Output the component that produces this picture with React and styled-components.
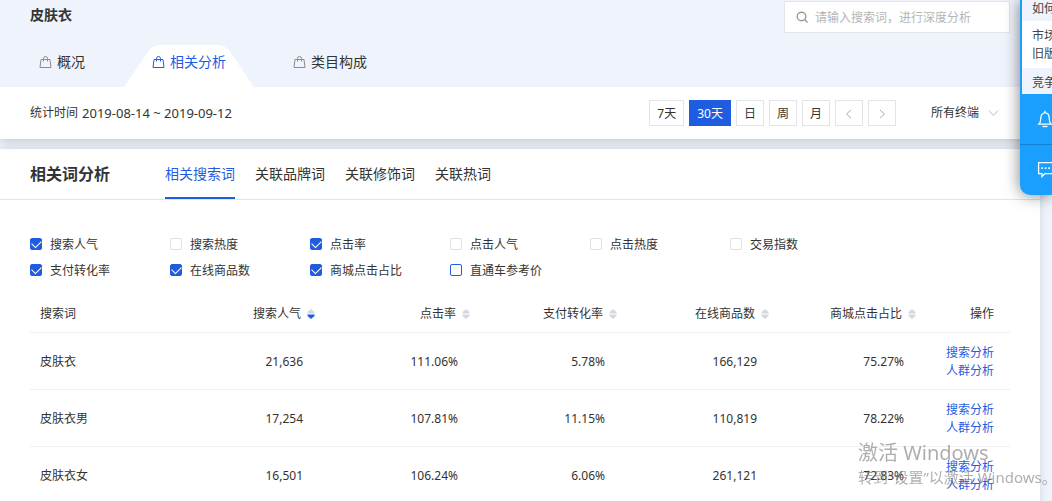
import { useState } from "react";
import styled, { createGlobalStyle, css } from "styled-components";

const GlobalStyle = createGlobalStyle`
  * {
    box-sizing: border-box;
  }

  html {
    scrollbar-width: none;
  }

  body {
    margin: 0;
    background: #eff3fb;
    color: #333;
    font-family: "Noto Sans", "Noto Sans CJK SC", sans-serif;
    font-size: 12px;
    line-height: 18px;
  }

  button,
  input,
  select {
    font: inherit;
    color: inherit;
  }

  h1,
  h2 {
    margin: 0;
  }
`;

const Page = styled.div`
  min-height: 100vh;
  padding-right: 12px;
`;

const Header = styled.header`
  position: relative;
  background: #eff3fb;
  box-shadow: 0 2px 10px rgba(0, 0, 0, 0.2);
`;

const HeaderTop = styled.div`
  display: flex;
  align-items: flex-start;
  justify-content: space-between;
  padding: 1px 30px 12px;
`;

const PageTitle = styled.h1`
  font-size: 14px;
  line-height: 28px;
`;

const SearchBox = styled.label`
  display: flex;
  align-items: center;
  gap: 6px;
  width: 226px;
  height: 32px;
  padding: 0 11px;
  border: 1px solid #e2e4e8;
  background: #fff;
`;

const SearchInput = styled.input`
  flex: 1;
  min-width: 0;
  padding: 1px 0 0;
  border: 0;
  outline: 0;
  background: none;

  &::placeholder {
    color: #b5b5b5;
    opacity: 1;
  }
`;

const MainTabs = styled.nav`
  display: flex;
  gap: 12px;
  padding-left: 11px;
`;

const MainTab = styled.button`
  display: flex;
  align-items: center;
  gap: 5px;
  height: 42px;
  padding: 0 27px 8px 28px;
  border: 0;
  background: none;
  font-size: 14px;
  cursor: pointer;

  svg {
    color: #8c8c8c;
  }

  ${({ $active }) =>
    $active &&
    css`
      background: #fff;
      color: #1f5de0;
      clip-path: path("M0 42 L23 8 Q28 0 36 0 H94 Q102 0 107 8 L130 42 Z");

      svg {
        color: #1f5de0;
      }
    `}
`;

const FilterBar = styled.div`
  display: flex;
  align-items: center;
  height: 52px;
  padding: 0 41px 0 30px;
  background: #fff;
`;

const Period = styled.div`
  display: flex;
  gap: 4px;
  margin-right: auto;

  time {
    font-size: 13px;
  }
`;

const RangeButtons = styled.div`
  display: flex;
  gap: 5px;
  margin-right: 35px;
`;

const RangeButton = styled.button`
  display: flex;
  align-items: center;
  justify-content: center;
  min-width: 28px;
  height: 26px;
  padding: 2px 7px 0;
  border: 1px solid ${({ $active }) => ($active ? "#1f5de0" : "#e2e4e8")};
  background: ${({ $active }) => ($active ? "#1f5de0" : "#fff")};
  color: ${({ $active }) => ($active ? "#fff" : "#333")};
  cursor: pointer;

  svg {
    flex: none;
    color: #aaa;
  }
`;

const TerminalSelect = styled.label`
  display: flex;
  align-items: center;
  gap: 8px;
  color: #bbb;
`;

const Select = styled.select`
  appearance: none;
  padding: 0;
  border: 0;
  background: none;
  color: #333;
`;

const Card = styled.section`
  margin-top: 10px;
  background: #fff;
  box-shadow: 0 0 8px rgba(0, 0, 0, 0.12);
`;

const CardHeader = styled.div`
  display: flex;
  align-items: stretch;
  gap: 55px;
  height: 51px;
  padding: 0 30px;
  border-bottom: 1px solid #e2e4e8;
`;

const CardTitle = styled.h2`
  font-size: 16px;
  line-height: 50px;
`;

const WordTabs = styled.nav`
  display: flex;
  gap: 20px;
`;

const WordTab = styled.button`
  padding: 2px 0 0;
  border: 0;
  border-bottom: 2px solid ${({ $active }) => ($active ? "#1f5de0" : "transparent")};
  background: none;
  color: ${({ $active }) => ($active ? "#1f5de0" : "#333")};
  font-size: 14px;
  cursor: pointer;
`;

const CardBody = styled.div`
  padding: 31px 30px 30px;
`;

const Metrics = styled.div`
  display: grid;
  grid-template-columns: repeat(6, 140px);
  margin-bottom: 12px;
`;

const Metric = styled.label`
  display: flex;
  align-items: center;
  gap: 8px;
  height: 26px;
`;

const MetricName = styled.span`
  padding-top: 2px;
`;

const Checkbox = styled.input`
  appearance: none;
  display: grid;
  place-items: center;
  width: 12px;
  height: 12px;
  margin: 0;
  border: 1px solid ${({ $focused }) => ($focused ? "#1f5de0" : "#dde0e4")};
  border-radius: 2px;
  background: #fff;

  &:checked {
    border-color: #1f5de0;
    background: #1f5de0;
  }

  &:checked::after {
    content: "";
    width: 8px;
    height: 5px;
    margin-bottom: 3px;
    border: solid #fff;
    border-width: 0 0 1px 1px;
    transform: rotate(-45deg);
  }
`;

const Table = styled.table`
  width: 100%;
  table-layout: fixed;
  border-collapse: separate;
  border-spacing: 0;
`;

const Th = styled.th`
  width: ${({ $width }) => $width}px;
  height: 38px;
  padding: 1px ${({ $last }) => ($last ? 16 : 10)}px 0 10px;
  border-bottom: 1px solid #f0f1f3;
  font-weight: 400;
  text-align: ${({ $left }) => ($left ? "left" : "right")};
`;

const SortButton = styled.button`
  display: inline-flex;
  align-items: center;
  gap: 6px;
  padding: 0;
  border: 0;
  background: none;
  cursor: pointer;
`;

const Td = styled.td`
  height: 57px;
  padding: 2px ${({ $last }) => ($last ? 16 : 22)}px 0 10px;
  border-bottom: 1px solid #f0f1f3;
  text-align: ${({ $left }) => ($left ? "left" : "right")};
`;

const ActionLink = styled.a`
  display: block;
  color: #1f5de0;
  text-decoration: none;
`;

const SidePanel = styled.aside`
  position: fixed;
  top: 0;
  right: 0;
  width: 32px;
  border-radius: 0 0 0 10px;
  background: #1a9fff;
  box-shadow: 0 0 16px rgba(0, 0, 0, 0.5);
`;

const Notice = styled.a`
  display: block;
  margin-left: 2px;
  padding: ${({ $lines }) => ($lines > 1 ? "6px 0 5px 10px" : "6px 0 2px 10px")};
  overflow: hidden;
  background: ${({ $tinted }) => ($tinted ? "#eff3fb" : "#fff")};
  color: #444;
  text-decoration: none;
  white-space: nowrap;

  &:first-child {
    padding: 0 0 3px 10px;
  }
`;

const NoticeLine = styled.span`
  display: block;
`;

const SideButton = styled.button`
  display: flex;
  align-items: center;
  width: 100%;
  height: ${({ $divided }) => ($divided ? 51 : 50)}px;
  padding: 0 0 2px 17px;
  border: 0;
  border-top: 1px solid ${({ $divided }) => ($divided ? "#1480d0" : "transparent")};
  background: none;
  color: #fff;
  overflow: hidden;

  svg {
    flex: none;
  }
`;

const Watermark = styled.div`
  position: fixed;
  right: 0;
  bottom: 12px;
  width: 194px;
  color: rgba(120, 120, 120, 0.6);
  font-size: 15px;
  line-height: 24px;
  white-space: nowrap;
  pointer-events: none;
`;

const WatermarkTitle = styled.div`
  font-size: 20px;
`;

const BagIcon = () => (
  <svg width="13" height="13" viewBox="0 0 13 13" fill="none" stroke="currentColor" aria-hidden="true">
    <path d="M2 3.500h9l1 8H1z" />
    <path d="M4.500 5.500V2.500a2 2 0 0 1 4 0v3" />
  </svg>
);

const SearchIcon = () => (
  <svg width="13" height="13" viewBox="0 0 13 13" fill="none" stroke="#999" strokeWidth="1.4" aria-hidden="true">
    <circle cx="5.5" cy="5.5" r="4.3" />
    <path d="M8.6 8.6l3 3" />
  </svg>
);

const Chevron = ({ d, width = 10, height = 10 }) => (
  <svg width={width} height={height} viewBox={`0 0 ${width} ${height}`} fill="none" stroke="currentColor" aria-hidden="true">
    <path d={d} />
  </svg>
);

const SortIcon = ({ descending }) => (
  <svg width="8" height="10" viewBox="0 0 8 10" aria-hidden="true">
    <path d="M4 0l3.500 3v1.500h-7V3z" fill="#d3d9e0" />
    <path d="M4 10L.5 7V5.500h7V7z" fill={descending ? "#1f5de0" : "#d3d9e0"} />
  </svg>
);

const BellIcon = () => (
  <svg width="16" height="18" viewBox="0 0 16 18" fill="none" stroke="currentColor" strokeWidth="1.3" aria-hidden="true">
    <path d="M8 .8v2M1.800 14.200c1.500-1.500 2-3 2-6C3.800 5 5.500 2.800 8 2.800s4.200 2.200 4.200 5.400c0 3 .5 4.500 2 6z" />
    <path d="M5.500 16.500h5" />
  </svg>
);

const ChatIcon = () => (
  <svg width="17" height="17" viewBox="0 0 17 17" fill="none" stroke="currentColor" strokeWidth="1.3" aria-hidden="true">
    <path d="M1.600 1.600h14v11H8l-3 3v-3H1.600z" />
    <path d="M4.300 7.100h1.600M7.800 7.100h1.600M11.300 7.100h1.600" strokeWidth="1.600" />
  </svg>
);

const mainTabs = ["概况", "相关分析", "类目构成"];
const ranges = ["7天", "30天", "日", "周", "月"];
const wordTabs = ["相关搜索词", "关联品牌词", "关联修饰词", "关联热词"];

const metrics = [
  { label: "搜索人气", checked: true },
  { label: "搜索热度" },
  { label: "点击率", checked: true },
  { label: "点击人气" },
  { label: "点击热度" },
  { label: "交易指数" },
  { label: "支付转化率", checked: true },
  { label: "在线商品数", checked: true },
  { label: "商城点击占比", checked: true },
  { label: "直通车参考价", focused: true },
];

const columns = [
  { label: "搜索人气", width: 155 },
  { label: "点击率", width: 155 },
  { label: "支付转化率", width: 147 },
  { label: "在线商品数", width: 152 },
  { label: "商城点击占比", width: 147 },
];

const rows = [
  { word: "皮肤衣", values: ["21,636", "111.06%", "5.78%", "166,129", "75.27%"] },
  { word: "皮肤衣男", values: ["17,254", "107.81%", "11.15%", "110,819", "78.22%"] },
  { word: "皮肤衣女", values: ["16,501", "106.24%", "6.06%", "261,121", "72.83%"] },
];

export default function App() {
  const [mainTab, setMainTab] = useState("相关分析");
  const [range, setRange] = useState("30天");
  const [wordTab, setWordTab] = useState("相关搜索词");
  const [sort, setSort] = useState("搜索人气");

  return (
    <>
      <GlobalStyle />
      <Page>
        <Header>
          <HeaderTop>
            <PageTitle>皮肤衣</PageTitle>
            <SearchBox>
              <SearchIcon />
              <SearchInput type="text" placeholder="请输入搜索词，进行深度分析" aria-label="搜索词" />
            </SearchBox>
          </HeaderTop>

          <MainTabs>
            {mainTabs.map((tab) => (
              <MainTab key={tab} type="button" $active={tab === mainTab} onClick={() => setMainTab(tab)}>
                <BagIcon />
                {tab}
              </MainTab>
            ))}
          </MainTabs>

          <FilterBar>
            <Period>
              统计时间 <time>2019-08-14 ~ 2019-09-12</time>
            </Period>
            <RangeButtons>
              {ranges.map((item) => (
                <RangeButton key={item} type="button" $active={item === range} onClick={() => setRange(item)}>
                  {item}
                </RangeButton>
              ))}
              <RangeButton type="button" aria-label="上一个">
                <Chevron d="M7 1L2.500 5 7 9" />
              </RangeButton>
              <RangeButton type="button" aria-label="下一个">
                <Chevron d="M3 1l4.500 4L3 9" />
              </RangeButton>
            </RangeButtons>
            <TerminalSelect>
              <Select aria-label="终端">
                <option>所有终端</option>
              </Select>
              <Chevron width={11} height={8} d="M1 1.500l4.500 5 4.500-5" />
            </TerminalSelect>
          </FilterBar>
        </Header>

        <Card>
          <CardHeader>
            <CardTitle>相关词分析</CardTitle>
            <WordTabs>
              {wordTabs.map((tab) => (
                <WordTab key={tab} type="button" $active={tab === wordTab} onClick={() => setWordTab(tab)}>
                  {tab}
                </WordTab>
              ))}
            </WordTabs>
          </CardHeader>

          <CardBody>
            <Metrics>
              {metrics.map(({ label, checked, focused }) => (
                <Metric key={label}>
                  <Checkbox type="checkbox" defaultChecked={checked} $focused={focused} />
                  <MetricName>{label}</MetricName>
                </Metric>
              ))}
            </Metrics>

            <Table>
              <thead>
                <tr>
                  <Th $left $width={140}>
                    搜索词
                  </Th>
                  {columns.map(({ label, width }) => (
                    <Th key={label} $width={width}>
                      <SortButton type="button" onClick={() => setSort(label)}>
                        {label}
                        <SortIcon descending={label === sort} />
                      </SortButton>
                    </Th>
                  ))}
                  <Th $last $width={84}>
                    操作
                  </Th>
                </tr>
              </thead>
              <tbody>
                {rows.map(({ word, values }) => (
                  <tr key={word}>
                    <Td $left>{word}</Td>
                    {values.map((value, i) => (
                      <Td key={columns[i].label}>{value}</Td>
                    ))}
                    <Td $last>
                      <ActionLink href="#search">搜索分析</ActionLink>
                      <ActionLink href="#crowd">人群分析</ActionLink>
                    </Td>
                  </tr>
                ))}
              </tbody>
            </Table>
          </CardBody>
        </Card>
      </Page>

      <SidePanel>
        <Notice href="#how" $tinted>
          如何
        </Notice>
        <Notice href="#market" $lines={2}>
          <NoticeLine>市场</NoticeLine>
          <NoticeLine>旧版</NoticeLine>
        </Notice>
        <Notice href="#compete" $tinted>
          竞争
        </Notice>
        <SideButton type="button" aria-label="通知">
          <BellIcon />
        </SideButton>
        <SideButton type="button" aria-label="消息" $divided>
          <ChatIcon />
        </SideButton>
      </SidePanel>

      <Watermark>
        <WatermarkTitle>激活 Windows</WatermarkTitle>
        转到“设置”以激活 Windows。
      </Watermark>
    </>
  );
}
